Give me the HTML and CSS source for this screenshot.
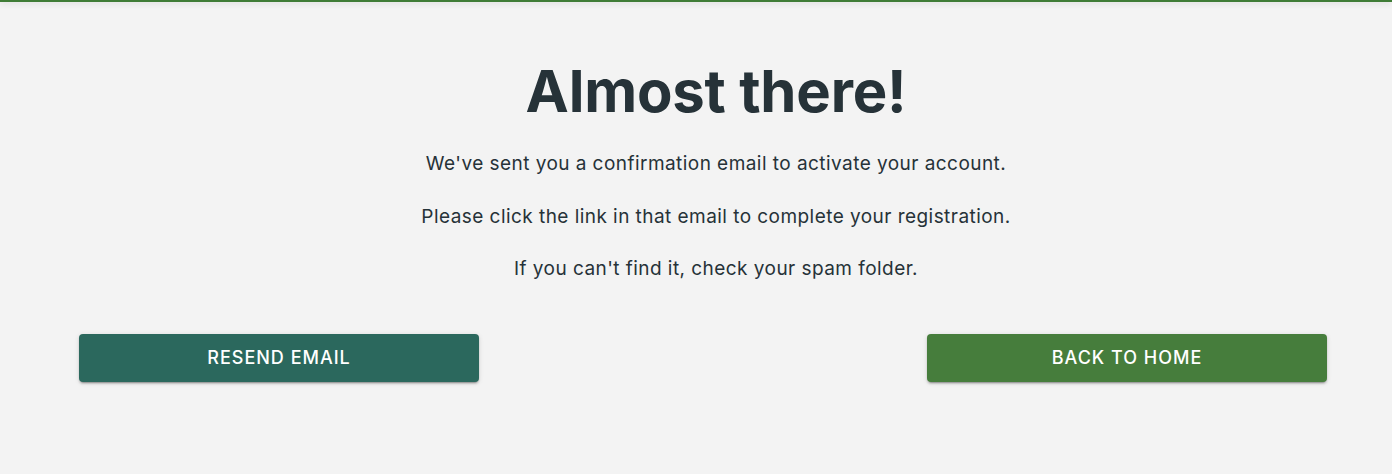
FILE: index.html
```html
<!DOCTYPE html>
<html lang="en">
<head>
<meta charset="utf-8">
<title>Almost there!</title>
<link rel="stylesheet" href="styles.css">
</head>
<body>
<div class="topbar"></div>
<main class="page">
  <section class="message">
    <h1 class="title">Almost there!</h1>
    <p class="line">We've sent you a confirmation email to activate your account.</p>
    <p class="line">Please click the link in that email to complete your registration.</p>
    <p class="line">If you can't find it, check your spam folder.</p>
  </section>
  <div class="actions">
    <button class="btn btn-resend">Resend Email</button>
    <button class="btn btn-home">Back to Home</button>
  </div>
</main>
</body>
</html>
```
FILE: styles.css
```css
* { box-sizing: border-box; }
html, body {
  margin: 0;
  padding: 0;
  background: #f3f3f3;
  height: 100%;
}
body {
  font-family: Inter, "Noto Sans", sans-serif;
  color: #263238;
}
.topbar {
  height: 2px;
  background: #3f7c36;
  box-shadow: 0 1px 6px rgba(0,0,0,0.18);
}
.page {
  padding-top: 54px;
}
.message {
  text-align: center;
  padding-left: 40px;
}
.title {
  margin: 0 0 24px;
  font-size: 58px;
  font-weight: 700;
  line-height: 70px;
  letter-spacing: -0.2px;
}
.line {
  margin: 0 0 24.5px;
  font-size: 19px;
  line-height: 28px;
  letter-spacing: 0.45px;
}
.actions {
  display: flex;
  justify-content: space-between;
  padding: 0 65px 0 79px;
  margin-top: 50.5px;
}
.btn {
  width: 400px;
  height: 48px;
  padding: 0 0 1px;
  border: 0;
  border-radius: 4px;
  color: #fff;
  font-family: Inter, "Noto Sans", sans-serif;
  font-size: 18px;
  font-weight: 500;
  letter-spacing: 1px;
  text-transform: uppercase;
  box-shadow: 0 3px 1px -2px rgba(0,0,0,0.2), 0 2px 2px 0 rgba(0,0,0,0.14), 0 1px 5px 0 rgba(0,0,0,0.12);
  cursor: pointer;
}
.btn-resend { background: #2b685d; }
.btn-home { background: #467d3c; }
```
